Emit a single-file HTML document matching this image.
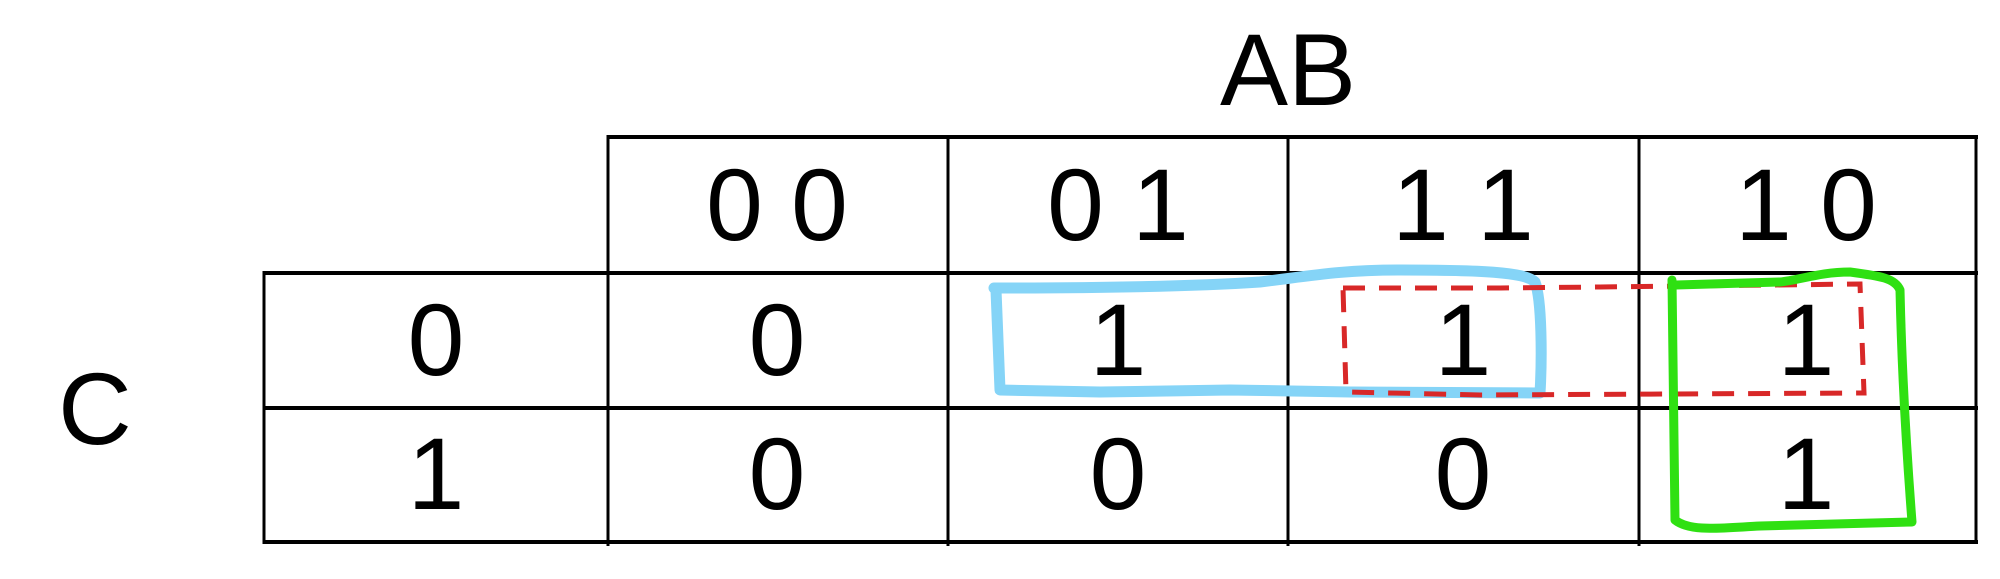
<!DOCTYPE html>
<html><head><meta charset="utf-8"><style>
html,body{margin:0;padding:0;background:#fff;width:2000px;height:579px;overflow:hidden}
svg text{font-family:"Liberation Sans",sans-serif;fill:#000}
</style></head><body>
<svg width="2000" height="579" viewBox="0 0 2000 579" xmlns="http://www.w3.org/2000/svg">
<g stroke="#000" fill="none">
<g stroke-width="4">
<line x1="607" y1="137" x2="1978" y2="137"/>
<line x1="263" y1="273" x2="1978" y2="273"/>
<line x1="263" y1="408" x2="1978" y2="408"/>
<line x1="263" y1="542" x2="1978" y2="542"/>
</g>
<g stroke-width="3">
<line x1="608" y1="135" x2="608" y2="546"/>
<line x1="948" y1="135" x2="948" y2="546"/>
<line x1="1288" y1="135" x2="1288" y2="546"/>
<line x1="1639" y1="135" x2="1639" y2="546"/>
<line x1="1976" y1="135" x2="1976" y2="544"/>
<line x1="264" y1="271" x2="264" y2="544"/>
</g>
</g>
<g font-size="102" text-anchor="middle">
<text x="1288" y="105">AB</text>
<text x="777" y="240">0 0</text>
<text x="1118" y="240">0 1</text>
<text x="1463" y="240">1 1</text>
<text x="1806" y="240">1 0</text>
<text x="436" y="375">0</text>
<text x="777" y="375">0</text>
<text x="1118" y="375">1</text>
<text x="1463" y="375">1</text>
<text x="1806" y="375">1</text>
<text x="436" y="509">1</text>
<text x="777" y="509">0</text>
<text x="1118" y="509">0</text>
<text x="1463" y="509">0</text>
<text x="1806" y="509">1</text>
<text x="95" y="444">C</text>
</g>
<path d="M994 288 C1100 288 1200 286 1260 282 C1310 276 1340 270 1400 270 C1480 270 1525 272 1535 282 C1542 300 1542 360 1540 393 L1350 392 L1230 390 L1100 392 L1000 390 L996 290 Z" fill="none" stroke="#85d4f7" stroke-width="11" stroke-linejoin="round"/>
<path d="M1343 288 L1500 288 L1600 287 L1860 284 L1864 393 L1480 395 L1346 392 Z" fill="none" stroke="#d82828" stroke-width="5" stroke-dasharray="22 14"/>
<path d="M1672 280 L1675 520 C1690 532 1720 528 1760 526 L1912 522 C1908 470 1902 380 1900 290 C1895 278 1880 276 1850 272 C1820 272 1800 280 1780 282 L1676 285" fill="none" stroke="#2fe012" stroke-width="9" stroke-linejoin="round" stroke-linecap="round"/>
</svg>
</body></html>
